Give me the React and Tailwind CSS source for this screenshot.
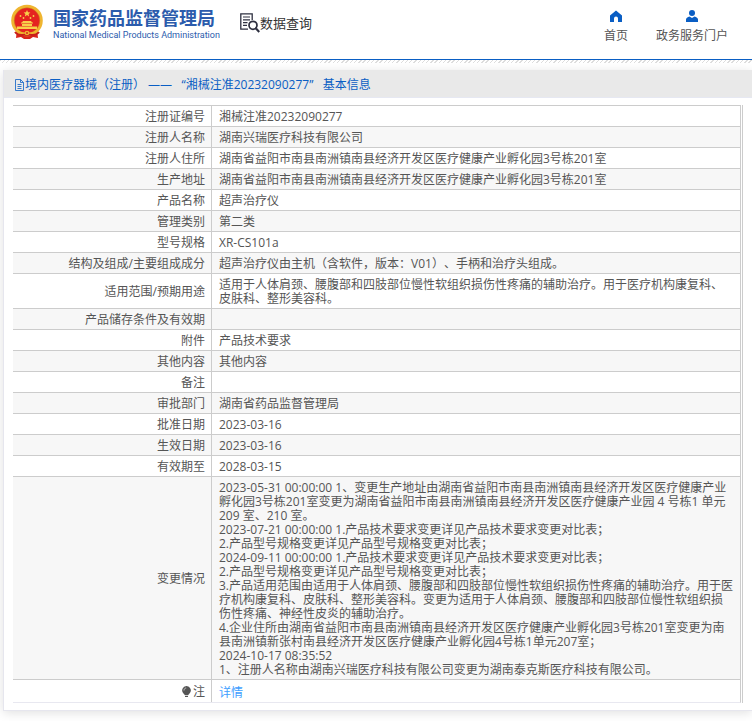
import React from 'react';

const rows = [
  { label: '注册证编号', value: '湘械注准20232090277' },
  { label: '注册人名称', value: '湖南兴瑞医疗科技有限公司' },
  { label: '注册人住所', value: '湖南省益阳市南县南洲镇南县经济开发区医疗健康产业孵化园3号栋201室' },
  { label: '生产地址', value: '湖南省益阳市南县南洲镇南县经济开发区医疗健康产业孵化园3号栋201室' },
  { label: '产品名称', value: '超声治疗仪' },
  { label: '管理类别', value: '第二类' },
  { label: '型号规格', value: 'XR-CS101a' },
  { label: '结构及组成/主要组成成分', value: '超声治疗仪由主机（含软件，版本：V01）、手柄和治疗头组成。' },
  {
    label: '适用范围/预期用途',
    value: '适用于人体肩颈、腰腹部和四肢部位慢性软组织损伤性疼痛的辅助治疗。用于医疗机构康复科、皮肤科、整形美容科。',
  },
  { label: '产品储存条件及有效期', value: '' },
  { label: '附件', value: '产品技术要求' },
  { label: '其他内容', value: '其他内容' },
  { label: '备注', value: '' },
  { label: '审批部门', value: '湖南省药品监督管理局' },
  { label: '批准日期', value: '2023-03-16' },
  { label: '生效日期', value: '2023-03-16' },
  { label: '有效期至', value: '2028-03-15' },
];

const changes = [
  '2023-05-31 00:00:00 1、变更生产地址由湖南省益阳市南县南洲镇南县经济开发区医疗健康产业孵化园3号栋201室变更为湖南省益阳市南县南洲镇南县经济开发区医疗健康产业园 4 号栋1 单元 209 室、210 室。',
  '2023-07-21 00:00:00 1.产品技术要求变更详见产品技术要求变更对比表；',
  '2.产品型号规格变更详见产品型号规格变更对比表；',
  '2024-09-11 00:00:00 1.产品技术要求变更详见产品技术要求变更对比表；',
  '2.产品型号规格变更详见产品型号规格变更对比表；',
  '3.产品适用范围由适用于人体肩颈、腰腹部和四肢部位慢性软组织损伤性疼痛的辅助治疗。用于医疗机构康复科、皮肤科、整形美容科。变更为适用于人体肩颈、腰腹部和四肢部位慢性软组织损伤性疼痛、神经性皮炎的辅助治疗。',
  '4.企业住所由湖南省益阳市南县南洲镇南县经济开发区医疗健康产业孵化园3号栋201室变更为南县南洲镇新张村南县经济开发区医疗健康产业孵化园4号栋1单元207室；',
  '2024-10-17 08:35:52',
  '1、注册人名称由湖南兴瑞医疗科技有限公司变更为湖南泰克斯医疗科技有限公司。',
];

function Emblem() {
  return (
    <svg width="34" height="36" viewBox="0 0 34 36" aria-hidden="true">
      <path d="M7 25 6 34l5-1 3 2h6l3-2 5 1-1-9z" fill="#d8241c" />
      <circle cx="17" cy="16.5" r="14.3" fill="#e52320" stroke="#efb530" strokeWidth="3" />
      <circle cx="17" cy="16.5" r="12.8" fill="none" stroke="#c98a1c" strokeWidth="0.5" />
      <path d="m17 6 1 2.2 2.4.2-1.8 1.6.5 2.4L17 11.1l-2.1 1.3.5-2.4-1.8-1.6 2.4-.2z" fill="#f8d04a" />
      <g fill="#f8d04a">
        <circle cx="10.5" cy="12" r="0.9" />
        <circle cx="13.5" cy="14" r="0.9" />
        <circle cx="20.5" cy="14" r="0.9" />
        <circle cx="23.5" cy="12" r="0.9" />
        <path d="M11 18.5h1l1-1.5h8l1 1.5h1v1H11zM12 20h10v2H12zM7 22.5h20V25H7z" />
      </g>
      <path d="M8 27c3 3 6 2 9 2s6 1 9-2" fill="none" stroke="#efb530" strokeWidth="1.2" />
      <path d="M5 28c4 5 7 2 12 3 5-1 8 2 12-3" fill="none" stroke="#c81e1a" strokeWidth="2" />
      <circle cx="17" cy="29" r="2.3" fill="#efb530" />
      <circle cx="17" cy="29" r="1" fill="#d8241c" />
    </svg>
  );
}

function QueryIcon() {
  return (
    <svg width="20" height="20" viewBox="0 0 20 20" fill="none" stroke="#2e3040" aria-hidden="true">
      <path d="M8 16.2H.8V.8h11.4V7" strokeWidth="1.3" />
      <path d="M3 4h7M3 6.8h7M3 9.6h4.5M3 12.4h4" strokeWidth="1.2" />
      <circle cx="13" cy="12.3" r="4" strokeWidth="1.7" />
      <path d="m16 15.5 3.3 3.5" strokeWidth="2.2" />
    </svg>
  );
}

function HomeIcon() {
  return (
    <svg width="12" height="12" viewBox="0 0 12 12" fill="#0a5ec4" aria-hidden="true">
      <path d="M6 .5 0 5.5V12h4V8.5a2 2 0 0 1 4 0V12h4V5.5z" />
    </svg>
  );
}

function UserIcon() {
  return (
    <svg width="12" height="12" viewBox="0 0 12 12" fill="#0a5ec4" aria-hidden="true">
      <circle cx="6" cy="3" r="3" />
      <path d="M0 12V9.5C0 8 1.5 7 3.5 6.5L6 8l2.5-1.5C10.5 7 12 8 12 9.5V12z" />
    </svg>
  );
}

function DocIcon() {
  return (
    <svg width="11" height="12" viewBox="0 0 11 12" fill="none" stroke="#0a5ec4" aria-hidden="true">
      <path d="M1.5.5h5l3 3v8h-8zM6.5.5v3h3M3.5 5.5h4M3.5 7.5h4M3.5 9.5h4" strokeWidth="0.8" />
    </svg>
  );
}

function BulbIcon() {
  return (
    <svg width="9" height="12" viewBox="0 0 9 12" aria-hidden="true">
      <path d="M4.5 0a4.3 4.3 0 0 0-3 7.4L3 9.2h3l1.5-1.8a4.3 4.3 0 0 0-3-7.4z" fill="#555" />
      <path d="M3 10.5h3" stroke="#555" />
      <path d="M2 4.5C2 3 3 2 4.2 2" fill="none" stroke="#ddd" strokeWidth="0.8" />
    </svg>
  );
}

function Row({ label, children }) {
  return (
    <tr className="even:bg-[#f7f7f7]">
      <th scope="row" className="w-[199px] border-t border-r border-[#ccc] pt-1 pr-1.5 pb-0.5 text-right font-normal">
        {label}
      </th>
      <td className="h-[21px] border-t border-[#ccc] pt-1 pr-1.5 pb-0.5 pl-[7px] whitespace-pre-line">{children}</td>
    </tr>
  );
}

export default function App() {
  return (
    <div className="bg-white font-['Open_Sans','Noto_Sans_CJK_SC',sans-serif] text-xs leading-[14px] text-[#555] [text-spacing-trim:space-all]">
      <header className="border-b border-[#0a5ec4]">
        <div className="flex h-[59px] items-start justify-between pr-6 pl-2.5">
          <div className="flex items-start">
            <a href="#home" className="flex items-start gap-[9px] pt-1">
              <Emblem />
              <span className="flex flex-col whitespace-nowrap pt-1 text-[#2b5bac]">
                <span className="text-lg leading-[20px] font-bold">国家药品监督管理局</span>
                <span className="font-['Roboto',sans-serif] text-[9px] leading-[14px]">
                  National Medical Products Administration
                </span>
              </span>
            </a>
            <a href="#query" className="ml-5 flex items-center pt-[13px] text-[13px] leading-[20px] text-[#333]">
              <QueryIcon />
              数据查询
            </a>
          </div>
          <nav className="flex gap-7 pt-2.5">
            <a href="#index" className="flex flex-col items-center gap-[7px]">
              <HomeIcon />
              首页
            </a>
            <a href="#portal" className="flex flex-col items-center gap-[7px]">
              <UserIcon />
              政务服务门户
            </a>
          </nav>
        </div>
      </header>
      <div className="h-[3px] bg-[repeating-linear-gradient(135deg,#ddd_0px,#ddd_1px,#fff_1px,#fff_3px)]" />

      <main className="overflow-hidden pt-[7px] pb-2.5 pl-[3px]">
        <section className="border-b border-l border-[#e6e6ee] pb-[7px] shadow-[0_2px_10px_rgba(0,0,0,0.12)]">
          <h1 className="flex h-7 items-center border-b border-[#e6e8f2] bg-[#e9e9e9] pt-0.5 pl-2.5 text-[#0a5ec4]">
            <DocIcon />
            <span>境内医疗器械（注册） ——&nbsp;&nbsp; “湘械注准20232090277”&nbsp;&nbsp; 基本信息</span>
          </h1>
          <div className="mt-[7px] mr-[9px] ml-[9px] border-r border-[#ccc] pr-px">
            <table className="w-full border-separate border-spacing-0 border-r border-b border-r-[#ccc] border-b-[#e8e8f0]">
              <tbody>
                {rows.map((row) => (
                  <Row key={row.label} label={row.label}>
                    {row.value}
                  </Row>
                ))}
                <Row label="变更情况">{changes.join('\n')}</Row>
                <Row
                  label={
                    <span className="flex items-center justify-end gap-0.5">
                      <BulbIcon />注
                    </span>
                  }
                >
                  <a href="#detail" className="block pt-0.5 text-[#409eff]">
                    详情
                  </a>
                </Row>
              </tbody>
            </table>
          </div>
        </section>
      </main>
    </div>
  );
}
